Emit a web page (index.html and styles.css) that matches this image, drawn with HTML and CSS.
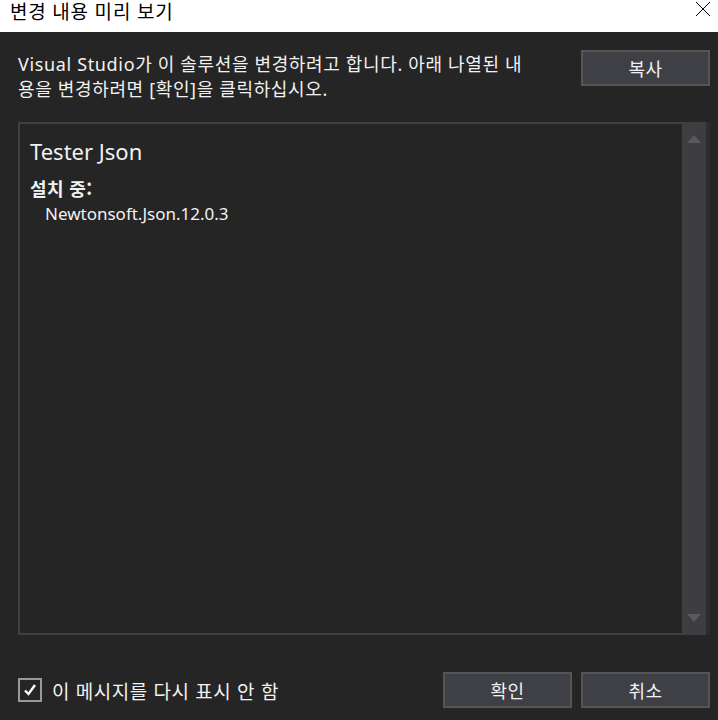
FILE: index.html
```html
<!DOCTYPE html>
<html lang="ko">
<head>
<meta charset="utf-8">
<title>변경 내용 미리 보기</title>
<link rel="stylesheet" href="styles.css">
</head>
<body>
<div class="window">
  <div class="titlebar">
    <span class="title">변경 내용 미리 보기</span>
    <span class="close">
      <svg width="16" height="16" viewBox="0 0 16 16"><path d="M1 1 L15 15 M15 1 L1 15" stroke="#000" stroke-width="1" fill="none"/></svg>
    </span>
  </div>
  <div class="content">
    <div class="top">
      <p class="message">Visual Studio가 이 솔루션을 변경하려고 합니다. 아래 나열된 내<br>용을 변경하려면 [확인]을 클릭하십시오.</p>
      <button class="btn">복사</button>
    </div>
    <div class="box">
      <div class="box-body">
        <div class="project">Tester Json</div>
        <div class="section">설치 중:</div>
        <div class="pkg">Newtonsoft.Json.12.0.3</div>
      </div>
      <div class="scrollbar">
        <span class="arrow up"></span>
        <span class="arrow down"></span>
      </div>
    </div>
    <div class="footer">
      <label class="check">
        <span class="checkbox">
          <svg width="14" height="14" viewBox="0 0 14 14"><path d="M2 7.5 L5.5 11 L12 2" stroke="#fff" stroke-width="2.4" fill="none"/></svg>
        </span>
        <span class="check-label">이 메시지를 다시 표시 안 함</span>
      </label>
      <div class="actions">
        <button class="btn">확인</button>
        <button class="btn">취소</button>
      </div>
    </div>
  </div>
</div>
</body>
</html>
```
FILE: styles.css
```css
* { box-sizing: border-box; }
html, body {
  margin: 0;
  padding: 0;
  background: #252526;
}
body {
  font-family: "Noto Sans", "Noto Sans CJK KR", sans-serif;
  color: #f1f1f1;
}
.window {
  width: 718px;
  height: 720px;
  display: flex;
  flex-direction: column;
  background: #252526;
}
.titlebar {
  height: 32px;
  background: #ffffff;
  color: #000;
  display: flex;
  align-items: center;
  justify-content: space-between;
  padding: 0 7px 0 10px;
}
.title {
  font-size: 19px;
  line-height: 20px;
  margin-top: -9px;
  letter-spacing: 0.8px;
}
.close {
  display: flex;
  margin-top: -14px;
}
.content {
  flex: 1;
  display: flex;
  flex-direction: column;
  padding: 18px 8px 12px 18px;
}
.top {
  display: flex;
  justify-content: space-between;
  align-items: flex-start;
  height: 36px;
}
.message {
  margin: 2px 0 0 0;
  font-size: 18px;
  line-height: 25px;
  letter-spacing: 0.65px;
}
.btn {
  width: 129px;
  height: 36px;
  background: #3f3f46;
  border: 2px solid #555555;
  color: #f1f1f1;
  font-family: "Noto Sans CJK KR", sans-serif;
  font-size: 18px;
  letter-spacing: 0.5px;
  padding: 0;
  border-radius: 0;
}
.box {
  margin-top: 36px;
  height: 513px;
  border: 2px solid #3f3f46;
  border-right: none;
  display: flex;
}
.box-body {
  flex: 1;
  padding: 12px 10px;
}
.project {
  font-size: 22px;
  line-height: 30px;
}
.section {
  margin-top: 10px;
  font-family: "Noto Sans CJK KR", sans-serif;
  font-weight: 700;
  font-size: 18px;
  line-height: 24px;
  letter-spacing: 0.4px;
}
.pkg {
  margin-top: 2px;
  padding-left: 15px;
  font-size: 17px;
  line-height: 24px;
}
.scrollbar {
  width: 28px;
  margin-top: -2px;
  margin-bottom: -2px;
  background: #3e3e42;
  border-right: 4px solid #2d2d30;
  display: flex;
  flex-direction: column;
  justify-content: space-between;
  align-items: center;
  padding: 13px 0 13px 0;
}
.arrow {
  width: 0;
  height: 0;
  border-left: 7px solid transparent;
  border-right: 7px solid transparent;
}
.arrow.up { border-bottom: 8px solid #5a5a5e; }
.arrow.down { border-top: 8px solid #5a5a5e; }
.footer {
  margin-top: 37px;
  display: flex;
  justify-content: space-between;
  align-items: center;
}
.check {
  display: flex;
  align-items: center;
  gap: 10px;
}
.checkbox {
  width: 24px;
  height: 24px;
  border: 2px solid #999999;
  display: flex;
  align-items: center;
  justify-content: center;
}
.check-label {
  font-family: "Noto Sans CJK KR", sans-serif;
  font-size: 19px;
  letter-spacing: 0.5px;
}
.actions {
  display: flex;
  gap: 9px;
}
```
